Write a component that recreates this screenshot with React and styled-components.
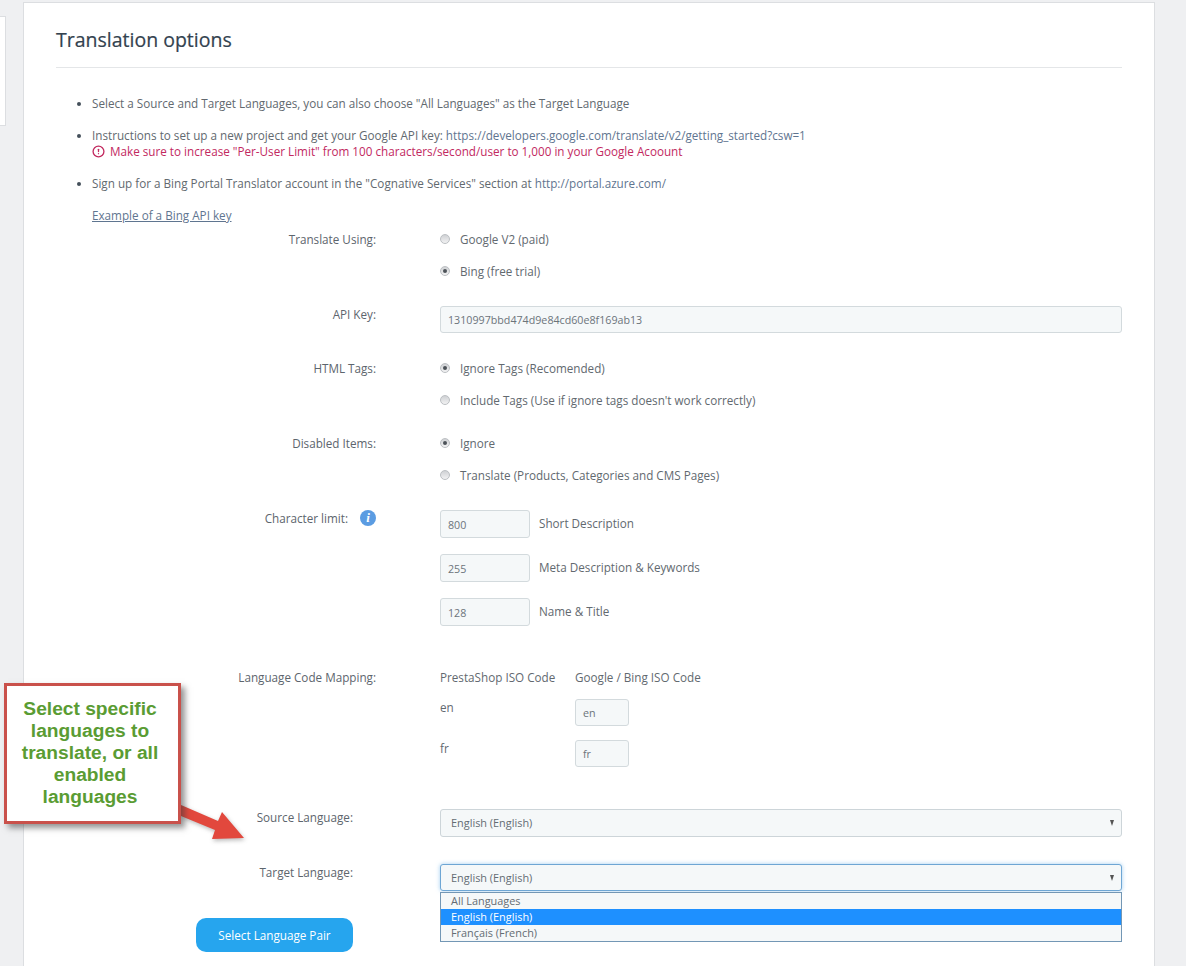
import React from "react";
import styled, { createGlobalStyle } from "styled-components";
import { CircleAlert } from "lucide-react";

const Global = createGlobalStyle`
  html, body { margin: 0; padding: 0; background: #eff0f2; }
  body { font-family: "Open Sans", "Liberation Sans", sans-serif; font-size: 11.7px; line-height: 16px; color: #62696f; }
  * { box-sizing: border-box; }
`;

const Page = styled.div`
  position: relative;
  display: flex;
  align-items: flex-start;
  height: 966px;
  overflow: hidden;
  background: #eff0f2;
`;
const SideStub = styled.div`
  width: 6px;
  height: 110px;
  margin-top: 16px;
  background: #fff;
  border: 1px solid #dcdee1;
  border-left: 0;
  flex: none;
`;
const Card = styled.main`
  width: 1132px;
  height: 964px;
  margin: 2px 0 0 17px;
  padding: 0 32px;
  background: #fff;
  border-top: 1px solid #dcdee1;
  border-left: 1px solid #dcdee1;
  border-right: 1px solid #dcdee1;
  flex: none;
`;
const Title = styled.h1`
  height: 65px;
  margin: 0;
  padding-top: 23px;
  font-size: 19.5px;
  line-height: 28px;
  font-weight: 500;
  color: #33424f;
  -webkit-text-stroke: 0.2px #33424f;
  border-bottom: 1px solid #e4e6e8;
`;
const Notes = styled.ul`
  margin: 27px 0 0;
  padding: 0 0 0 36px;
  display: flex;
  flex-direction: column;
  gap: 16px;
  & > li::marker { font-size: 12px; color: #44505a; }
`;
const Link = styled.a`
  color: #5f7590;
  text-decoration: none;
`;
const Warning = styled.div`
  display: flex;
  align-items: center;
  gap: 5px;
  color: #c2295f;
`;
const ExampleLink = styled.a`
  display: block;
  margin: 16px 0 8px 36px;
  color: #5f7590;
  text-decoration: underline;
`;
const Form = styled.form`
  display: flex;
  flex-direction: column;
  gap: 27px;
`;
const Row = styled.div`
  display: grid;
  grid-template-columns: 320px 682px;
  column-gap: 64px;
  margin-top: ${(p) => p.$extra || 0}px;
`;
const Label = styled.label`
  display: flex;
  justify-content: flex-end;
  gap: 12px;
  padding-right: ${(p) => (p.$narrow ? 23 : 0)}px;
  color: #5d656d;
`;
const InfoBadge = styled.span`
  width: 16px;
  height: 16px;
  border-radius: 50%;
  background: #5b9ce2;
  color: #fff;
  font: italic bold 13px/16px "Liberation Serif", serif;
  text-align: center;
`;
const Options = styled.div`
  display: flex;
  flex-direction: column;
  gap: 16px;
`;
const Option = styled.div`
  display: flex;
  align-items: center;
  gap: 10px;
  height: 16px;
`;
const Radio = styled.span`
  position: relative;
  width: 10px;
  height: 10px;
  border-radius: 50%;
  border: 1px solid #bcbfc3;
  background: linear-gradient(#cfd1d4, #f2f2f3);
  flex: none;
  &::after {
    content: "";
    display: ${(p) => (p.$on ? "block" : "none")};
    position: absolute;
    left: 2px;
    top: 2px;
    width: 4px;
    height: 4px;
    border-radius: 50%;
    background: #4c5258;
  }
`;
const Field = styled.div`
  display: flex;
  align-items: center;
  width: ${(p) => p.$w || "100%"};
  height: ${(p) => p.$h || 28}px;
  padding-left: 7px;
  padding-top: ${(p) => (p.$h ? 0 : 1)}px;
  background: #f5f8f9;
  border: 1px solid #d3dadd;
  border-radius: 3px;
  font-size: 10.7px;
  color: #6c747b;
  flex: none;
`;
const Limits = styled.div`
  display: flex;
  flex-direction: column;
  gap: 16px;
`;
const LimitRow = styled.div`
  display: flex;
  align-items: center;
  gap: 9px;
`;
const LimitText = styled.span`
  padding-bottom: 2px;
`;
const Mapping = styled.div`
  display: grid;
  grid-template-columns: 135px auto;
  justify-content: start;
  row-gap: 14px;
`;
const MapHead = styled.div`
  height: 16px;
`;
const Iso = styled.div`
  height: 27px;
`;
const SelectWrap = styled.div`
  position: relative;
`;
const SelectBox = styled.div`
  display: flex;
  align-items: center;
  justify-content: space-between;
  height: ${(p) => (p.$focus ? 27 : 28)}px;
  padding: 0 7px 0 10px;
  background: #f5f8f9;
  border: 1px solid ${(p) => (p.$focus ? "#6ea6d4" : "#cdd5d9")};
  box-shadow: ${(p) => (p.$focus ? "0 0 4px rgba(102,175,233,.6)" : "none")};
  border-radius: 3px;
  font-size: 10.9px;
  color: #646c73;
`;
const Caret = styled.span`
  width: 0;
  height: 0;
  border-left: 2.5px solid transparent;
  border-right: 2.5px solid transparent;
  border-top: 6px solid #555;
`;
const Dropdown = styled.div`
  position: absolute;
  left: 0;
  right: 0;
  top: 28px;
  background: #f5f8f9;
  border: 1px solid #7397b5;
  font-size: 10.9px;
  line-height: 16px;
  color: #646c73;
`;
const DropItem = styled.div`
  padding-left: 10px;
  height: 16px;
  background: ${(p) => (p.$sel ? "#1e90ff" : "transparent")};
  color: ${(p) => (p.$sel ? "#fff" : "inherit")};
`;
const Submit = styled.button`
  width: 157px;
  height: 34px;
  margin-left: 140px;
  border: 0;
  border-radius: 10px;
  background: #26a5ee;
  color: #fff;
  font: 11.7px/16px "Open Sans", sans-serif;
`;
const Callout = styled.div`
  position: absolute;
  left: 4px;
  top: 683px;
  width: 177px;
  height: 141px;
  padding: 12px 15px 0 10px;
  background: #fff;
  border: 3px solid #c9514b;
  box-shadow: 4px 4px 6px rgba(60, 60, 60, .55);
  font: bold 19.2px/22px "Liberation Sans", Arial, sans-serif;
  color: #5a9c33;
  text-align: center;
`;
const Arrow = styled.svg`
  position: absolute;
  left: 175px;
  top: 800px;
  filter: drop-shadow(1px 2px 2px rgba(60, 60, 60, .35));
`;

export default function App() {
  return (
    <Page>
      <Global />
      <SideStub />
      <Card>
        <Title>Translation options</Title>
        <Notes>
          <li>Select a Source and Target Languages, you can also choose "All Languages" as the Target Language</li>
          <li>
            Instructions to set up a new project and get your Google API key:{" "}
            <Link>https://developers.google.com/translate/v2/getting_started?csw=1</Link>
            <Warning>
              <CircleAlert size={13} strokeWidth={2.4} />
              Make sure to increase "Per-User Limit" from 100 characters/second/user to 1,000 in your Google Acoount
            </Warning>
          </li>
          <li>
            Sign up for a Bing Portal Translator account in the "Cognative Services" section at{" "}
            <Link>http://portal.azure.com/</Link>
          </li>
        </Notes>
        <ExampleLink>Example of a Bing API key</ExampleLink>
        <Form>
          <Row>
            <Label>Translate Using:</Label>
            <Options>
              <Option><Radio />Google V2 (paid)</Option>
              <Option><Radio $on />Bing (free trial)</Option>
            </Options>
          </Row>
          <Row>
            <Label>API Key:</Label>
            <Field $h={27}>1310997bbd474d9e84cd60e8f169ab13</Field>
          </Row>
          <Row>
            <Label>HTML Tags:</Label>
            <Options>
              <Option><Radio $on />Ignore Tags (Recomended)</Option>
              <Option><Radio />Include Tags (Use if ignore tags doesn't work correctly)</Option>
            </Options>
          </Row>
          <Row>
            <Label>Disabled Items:</Label>
            <Options>
              <Option><Radio $on />Ignore</Option>
              <Option><Radio />Translate (Products, Categories and CMS Pages)</Option>
            </Options>
          </Row>
          <Row>
            <Label>Character limit: <InfoBadge>i</InfoBadge></Label>
            <Limits>
              <LimitRow><Field $w="90px">800</Field><LimitText>Short Description</LimitText></LimitRow>
              <LimitRow><Field $w="90px">255</Field><LimitText>Meta Description &amp; Keywords</LimitText></LimitRow>
              <LimitRow><Field $w="90px">128</Field><LimitText>Name &amp; Title</LimitText></LimitRow>
            </Limits>
          </Row>
          <Row $extra={16}>
            <Label>Language Code Mapping:</Label>
            <Mapping>
              <MapHead>PrestaShop ISO Code</MapHead>
              <MapHead>Google / Bing ISO Code</MapHead>
              <Iso>en</Iso>
              <Field $w="54px" $h={27}>en</Field>
              <Iso>fr</Iso>
              <Field $w="54px" $h={27}>fr</Field>
            </Mapping>
          </Row>
          <Row $extra={15}>
            <Label $narrow>Source Language:</Label>
            <SelectBox>English (English)<Caret /></SelectBox>
          </Row>
          <Row>
            <Label $narrow>Target Language:</Label>
            <SelectWrap>
              <SelectBox $focus>English (English)<Caret /></SelectBox>
              <Dropdown>
                <DropItem>All Languages</DropItem>
                <DropItem $sel>English (English)</DropItem>
                <DropItem>Français (French)</DropItem>
              </Dropdown>
            </SelectWrap>
          </Row>
          <Submit type="button">Select Language Pair</Submit>
        </Form>
      </Card>
      <Arrow width="80" height="50" viewBox="0 0 80 50">
        <polygon points="6,5 43,21 47,12 69,38 37,39 40,30 6,16" fill="#e2483d" />
      </Arrow>
      <Callout>Select specific languages to translate, or all enabled languages</Callout>
    </Page>
  );
}
